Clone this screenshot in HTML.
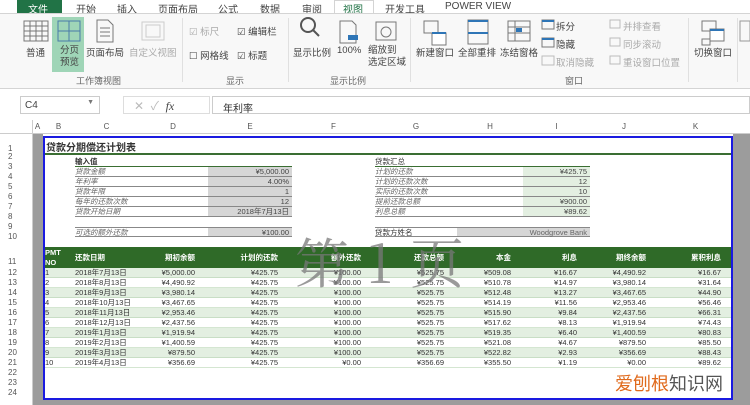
<!DOCTYPE html>
<html><head><meta charset="utf-8"><style>
*{margin:0;padding:0;box-sizing:border-box}
body{width:750px;height:405px;overflow:hidden;background:#fff;font-family:"Liberation Sans","Noto Sans CJK SC",sans-serif;position:relative;color:#333}
.a{position:absolute;white-space:nowrap}
.t{font-size:10px;top:1px;color:#444}
.lbl{font-size:9.5px;color:#444}
.gl{font-size:9px;color:#666;top:74px}
.sep{position:absolute;top:18px;width:1px;height:64px;background:#e0e0e0}
.rn{position:absolute;left:0;width:32px;font-size:8px;color:#555;padding-left:8px}
.ch{position:absolute;top:122px;font-size:8px;color:#555;text-align:center}
.r{position:absolute;left:43px;width:690px;height:10px;font-size:7.5px;color:#333}
.r span{position:absolute;top:0;line-height:10px}
.g{background:#e3efe1;border-bottom:1px solid #c8dec5}
.w{border-bottom:1px solid #d4e6d1}
.sl{position:absolute;font-size:7.5px;color:#666;font-style:italic;height:10px;line-height:10px;border-bottom:1px solid #888}
.sv{position:absolute;font-size:7.5px;color:#444;height:10px;line-height:10px;text-align:right;padding-right:3px;border-bottom:1px solid #888}
.hd{position:absolute;top:0;color:#fff;font-size:7.5px;font-weight:bold;line-height:21px}
</style></head><body>
<!-- tabs -->
<div class="a" style="left:0;top:0;width:750px;height:13px;background:#fff"></div>
<div class="a" style="left:17px;top:0;width:45px;height:13px;background:#217346"></div>
<div class="a t" style="left:28px;color:#fff">文件</div>
<div class="a t" style="left:76px">开始</div>
<div class="a t" style="left:117px">插入</div>
<div class="a t" style="left:158px">页面布局</div>
<div class="a t" style="left:218px">公式</div>
<div class="a t" style="left:260px">数据</div>
<div class="a t" style="left:302px">审阅</div>
<div class="a" style="left:334px;top:0;width:40px;height:14px;border:1px solid #d4d4d4;border-bottom:none;background:#fff"></div>
<div class="a t" style="left:343px;color:#217346">视图</div>
<div class="a t" style="left:385px">开发工具</div>
<div class="a t" style="left:445px">POWER VIEW</div>
<!-- ribbon -->
<div class="a" style="left:0;top:13px;width:750px;height:76px;background:#f8f8f8;border-top:1px solid #d4d4d4;border-bottom:1px solid #d4d4d4"></div>
<svg class="a" style="left:0;top:13px" width="750" height="76">
<g fill="none" stroke="#777" stroke-width="1">
<rect x="24" y="8" width="24" height="20"/><path d="M24 13h24M24 18h24M24 23h24M30 8v20M36 8v20M42 8v20"/>
</g>
<rect x="52" y="4" width="32" height="55" fill="#9fd5b7"/>
<g fill="none" stroke="#4a7aa8"><rect x="58" y="8" width="22" height="20"/><path d="M69 8v20M58 18h22"/></g>
<g fill="none" stroke="#777"><path d="M97 7h11l5 5v17h-16z M100 15h10M100 19h10M100 23h10"/></g>
<g fill="none" stroke="#ccc"><rect x="142" y="9" width="22" height="18"/><rect x="146" y="12" width="14" height="12"/></g>
<g fill="none" stroke="#555" stroke-width="2"><circle cx="308" cy="12" r="7"/><path d="M313 17l6 6"/></g>
<g fill="none" stroke="#777"><path d="M340 8h12l4 4v18h-16z"/></g><rect x="348" y="22" width="10" height="5" fill="#2e75b6"/>
<g fill="none" stroke="#777"><rect x="376" y="9" width="20" height="18"/><circle cx="386" cy="19" r="5"/></g>
<g fill="none" stroke="#777"><rect x="424" y="8" width="14" height="12"/><rect x="432" y="20" width="14" height="12" fill="#fff"/></g>
<path d="M432 20h14" stroke="#2e75b6" stroke-width="2"/>
<g fill="none" stroke="#777"><rect x="468" y="7" width="20" height="24"/></g><path d="M468 8h20M468 20h20" stroke="#2e75b6" stroke-width="2"/>
<g fill="none" stroke="#777"><rect x="508" y="8" width="22" height="20"/><path d="M508 14h22M508 20h22M515 8v20"/></g>
<rect x="516" y="15" width="6" height="4" fill="#2e75b6"/>
<g fill="none" stroke="#777"><rect x="542" y="7" width="12" height="9"/><rect x="542" y="25" width="12" height="9"/><rect x="542" y="43" width="12" height="9" stroke="#bbb"/></g>
<path d="M542 8h12M542 26h12" stroke="#2e75b6" stroke-width="2"/>
<g fill="none" stroke="#bbb"><rect x="610" y="7" width="10" height="8"/><rect x="610" y="25" width="10" height="8"/><rect x="610" y="43" width="10" height="8"/></g>
<g fill="none" stroke="#777"><rect x="702" y="8" width="14" height="10"/><rect x="710" y="16" width="14" height="12" fill="#fff"/><rect x="702" y="26" width="8" height="6"/></g>
<path d="M710 17h14" stroke="#2e75b6" stroke-width="2"/>
<g fill="none" stroke="#999"><rect x="740" y="8" width="10" height="20"/></g>
</svg>
<div class="a lbl" style="left:26px;top:45px">普通</div>
<div class="a lbl" style="left:60px;top:45px;line-height:12px">分页<br>预览</div>
<div class="a lbl" style="left:86px;top:45px">页面布局</div>
<div class="a lbl" style="left:129px;top:45px;color:#aaa">自定义视图</div>
<div class="a gl" style="left:76px">工作簿视图</div>
<div class="sep" style="left:182px"></div>
<div class="a lbl" style="left:189px;top:24px;color:#aaa">☑ 标尺</div>
<div class="a lbl" style="left:237px;top:24px">☑ 编辑栏</div>
<div class="a lbl" style="left:189px;top:48px">☐ 网格线</div>
<div class="a lbl" style="left:237px;top:48px">☑ 标题</div>
<div class="a gl" style="left:226px">显示</div>
<div class="sep" style="left:288px"></div>
<div class="a lbl" style="left:293px;top:45px">显示比例</div>
<div class="a lbl" style="left:337px;top:45px">100%</div>
<div class="a lbl" style="left:368px;top:45px;line-height:12px">缩放到<br>选定区域</div>
<div class="a gl" style="left:330px">显示比例</div>
<div class="sep" style="left:410px"></div>
<div class="a lbl" style="left:416px;top:45px">新建窗口</div>
<div class="a lbl" style="left:458px;top:45px">全部重排</div>
<div class="a lbl" style="left:500px;top:45px">冻结窗格</div>
<div class="a lbl" style="left:556px;top:19px">拆分</div>
<div class="a lbl" style="left:556px;top:37px">隐藏</div>
<div class="a lbl" style="left:556px;top:55px;color:#aaa">取消隐藏</div>
<div class="a lbl" style="left:623px;top:19px;color:#aaa">并排查看</div>
<div class="a lbl" style="left:623px;top:37px;color:#aaa">同步滚动</div>
<div class="a lbl" style="left:623px;top:55px;color:#aaa">重设窗口位置</div>
<div class="a gl" style="left:565px">窗口</div>
<div class="sep" style="left:688px"></div>
<div class="a lbl" style="left:694px;top:45px">切换窗口</div>
<div class="sep" style="left:737px"></div>
<!-- formula bar -->
<div class="a" style="left:20px;top:96px;width:80px;height:18px;border:1px solid #ccc;background:#fff;font-size:10px;padding:3px 4px;color:#444">C4<span style="position:absolute;right:5px;top:2px;font-size:7px;color:#777">▼</span></div>
<div class="a" style="left:123px;top:96px;width:87px;height:18px;border:1px solid #ddd;background:#fff;font-size:12px;color:#bbb;padding-left:10px">✕ &nbsp;✓ &nbsp;<i style="color:#444;font-family:'Liberation Serif',serif">fx</i></div>
<div class="a" style="left:212px;top:96px;width:538px;height:18px;border:1px solid #ccc;background:#fff;font-size:10px;padding:3px 10px;color:#333">年利率</div>
<!-- column headers -->
<div class="a" style="left:0;top:120px;width:750px;height:14px;background:#fff;border-bottom:1px solid #ccc"></div>
<div class="ch" style="left:33px;width:9px">A</div><div class="ch" style="left:42px;width:33px">B</div><div class="ch" style="left:75px;width:63px">C</div><div class="ch" style="left:138px;width:70px">D</div><div class="ch" style="left:208px;width:84px">E</div><div class="ch" style="left:292px;width:83px">F</div><div class="ch" style="left:375px;width:82px">G</div><div class="ch" style="left:457px;width:66px">H</div><div class="ch" style="left:523px;width:67px">I</div><div class="ch" style="left:590px;width:68px">J</div><div class="ch" style="left:658px;width:75px">K</div>
<!-- gray areas -->
<div class="a" style="left:32px;top:134px;width:11px;height:271px;background:#9c9c9c"></div>
<div class="a" style="left:733px;top:134px;width:17px;height:271px;background:#9c9c9c"></div>
<div class="a" style="left:32px;top:400px;width:718px;height:5px;background:#9c9c9c"></div>
<div class="a" style="left:32px;top:120px;width:1px;height:285px;background:#ccc"></div>
<!-- row numbers -->
<div class="rn" style="top:144px">1</div><div class="rn" style="top:152px">2</div><div class="rn" style="top:162px">3</div><div class="rn" style="top:172px">4</div><div class="rn" style="top:182px">5</div><div class="rn" style="top:192px">6</div><div class="rn" style="top:202px">7</div><div class="rn" style="top:212px">8</div><div class="rn" style="top:222px">9</div><div class="rn" style="top:232px">10</div><div class="rn" style="top:257px">11</div>
<div class="rn" style="top:268px">12</div><div class="rn" style="top:278px">13</div><div class="rn" style="top:288px">14</div><div class="rn" style="top:298px">15</div><div class="rn" style="top:308px">16</div><div class="rn" style="top:318px">17</div><div class="rn" style="top:328px">18</div><div class="rn" style="top:338px">19</div><div class="rn" style="top:348px">20</div><div class="rn" style="top:358px">21</div><div class="rn" style="top:368px">22</div><div class="rn" style="top:378px">23</div><div class="rn" style="top:388px">24</div>
<!-- page -->
<div class="a" style="left:43px;top:136px;width:690px;height:264px;background:#fff"></div>
<div class="a" style="left:46px;top:139px;font-size:10px;font-weight:bold;color:#333">贷款分期偿还计划表</div>
<div class="a" style="left:43px;top:153px;width:690px;height:2px;background:#3a6e32"></div>
<div class="a" style="left:75px;top:156px;font-size:7.5px;font-weight:bold;color:#333">输入值</div>
<div class="a" style="left:75px;top:166px;width:217px;height:1px;background:#3a6e32"></div>
<div class="sl" style="left:75px;top:167px;width:133px">贷款金额</div><div class="sv" style="left:208px;top:167px;width:84px;background:#d6d6d6">¥5,000.00</div>
<div class="sl" style="left:75px;top:177px;width:133px">年利率</div><div class="sv" style="left:208px;top:177px;width:84px;background:#d6d6d6">4.00%</div>
<div class="sl" style="left:75px;top:187px;width:133px">贷款年限</div><div class="sv" style="left:208px;top:187px;width:84px;background:#d6d6d6">1</div>
<div class="sl" style="left:75px;top:197px;width:133px">每年的还款次数</div><div class="sv" style="left:208px;top:197px;width:84px;background:#d6d6d6">12</div>
<div class="sl" style="left:75px;top:207px;width:133px">贷款开始日期</div><div class="sv" style="left:208px;top:207px;width:84px;background:#d6d6d6">2018年7月13日</div>
<div class="sl" style="left:75px;top:227px;width:133px;border-top:1px solid #888">可选的额外还款</div><div class="sv" style="left:208px;top:227px;width:84px;background:#d6d6d6;border-top:1px solid #888">¥100.00</div>
<div class="a" style="left:375px;top:156px;font-size:7.5px;color:#333">贷款汇总</div>
<div class="a" style="left:375px;top:166px;width:215px;height:1px;background:#3a6e32"></div>
<div class="sl" style="left:375px;top:167px;width:148px">计划的还款</div><div class="sv" style="left:523px;top:167px;width:67px;background:#e3efe1">¥425.75</div>
<div class="sl" style="left:375px;top:177px;width:148px">计划的还款次数</div><div class="sv" style="left:523px;top:177px;width:67px;background:#e3efe1">12</div>
<div class="sl" style="left:375px;top:187px;width:148px">实际的还款次数</div><div class="sv" style="left:523px;top:187px;width:67px;background:#e3efe1">10</div>
<div class="sl" style="left:375px;top:197px;width:148px">提前还款总额</div><div class="sv" style="left:523px;top:197px;width:67px;background:#e3efe1">¥900.00</div>
<div class="sl" style="left:375px;top:207px;width:148px">利息总额</div><div class="sv" style="left:523px;top:207px;width:67px;background:#e3efe1">¥89.62</div>
<div class="sl" style="left:375px;top:227px;width:82px;font-style:normal;color:#333;border-top:1px solid #888">贷款方姓名</div><div class="sv" style="left:457px;top:227px;width:133px;background:#d6d6d6;color:#666;border-top:1px solid #888">Woodgrove Bank</div>
<!-- header band -->
<div class="a" style="left:43px;top:247px;width:690px;height:21px;background:#2f6a28">
<span class="hd" style="left:2px;line-height:10px;top:1px">PMT<br>NO</span>
<span class="hd" style="left:32px">还款日期</span>
<span class="hd" style="right:538px">期初余额</span>
<span class="hd" style="right:455px">计划的还款</span>
<span class="hd" style="right:372px">额外还款</span>
<span class="hd" style="right:289px">还款总额</span>
<span class="hd" style="right:222px">本金</span>
<span class="hd" style="right:156px">利息</span>
<span class="hd" style="right:87px">期终余额</span>
<span class="hd" style="right:12px">累积利息</span>
</div>
<div id="rows"></div>
<script>
var d=[["1","2018年7月13日","¥5,000.00","¥425.75","¥100.00","¥525.75","¥509.08","¥16.67","¥4,490.92","¥16.67"],
["2","2018年8月13日","¥4,490.92","¥425.75","¥100.00","¥525.75","¥510.78","¥14.97","¥3,980.14","¥31.64"],
["3","2018年9月13日","¥3,980.14","¥425.75","¥100.00","¥525.75","¥512.48","¥13.27","¥3,467.65","¥44.90"],
["4","2018年10月13日","¥3,467.65","¥425.75","¥100.00","¥525.75","¥514.19","¥11.56","¥2,953.46","¥56.46"],
["5","2018年11月13日","¥2,953.46","¥425.75","¥100.00","¥525.75","¥515.90","¥9.84","¥2,437.56","¥66.31"],
["6","2018年12月13日","¥2,437.56","¥425.75","¥100.00","¥525.75","¥517.62","¥8.13","¥1,919.94","¥74.43"],
["7","2019年1月13日","¥1,919.94","¥425.75","¥100.00","¥525.75","¥519.35","¥6.40","¥1,400.59","¥80.83"],
["8","2019年2月13日","¥1,400.59","¥425.75","¥100.00","¥525.75","¥521.08","¥4.67","¥879.50","¥85.50"],
["9","2019年3月13日","¥879.50","¥425.75","¥100.00","¥525.75","¥522.82","¥2.93","¥356.69","¥88.43"],
["10","2019年4月13日","¥356.69","¥425.75","¥0.00","¥356.69","¥355.50","¥1.19","¥0.00","¥89.62"]];
var R=[538,455,372,289,222,156,87,12],h="";
d.forEach(function(r,i){h+='<div class="r '+(i%2?'w':'g')+'" style="top:'+(268+i*10)+'px"><span style="left:2px">'+r[0]+'</span><span style="left:32px">'+r[1]+'</span>';
for(var k=0;k<8;k++)h+='<span style="right:'+R[k]+'px">'+r[k+2]+'</span>';h+='</div>';});
document.getElementById('rows').innerHTML=h;
</script>
<!-- watermark -->
<div class="a" style="left:295px;top:222px;font-family:'Noto Serif CJK SC',serif;font-size:54px;color:rgba(120,120,120,.75);letter-spacing:2px">第 1 页</div>
<div class="a" style="left:615px;top:370px;font-size:18px;color:#e06a1c">爱刨根<span style="color:#555">知识网</span></div>
<!-- blue border -->
<div class="a" style="left:43px;top:136px;width:690px;height:264px;border:2px solid #1a1ae0"></div>
</body></html>
